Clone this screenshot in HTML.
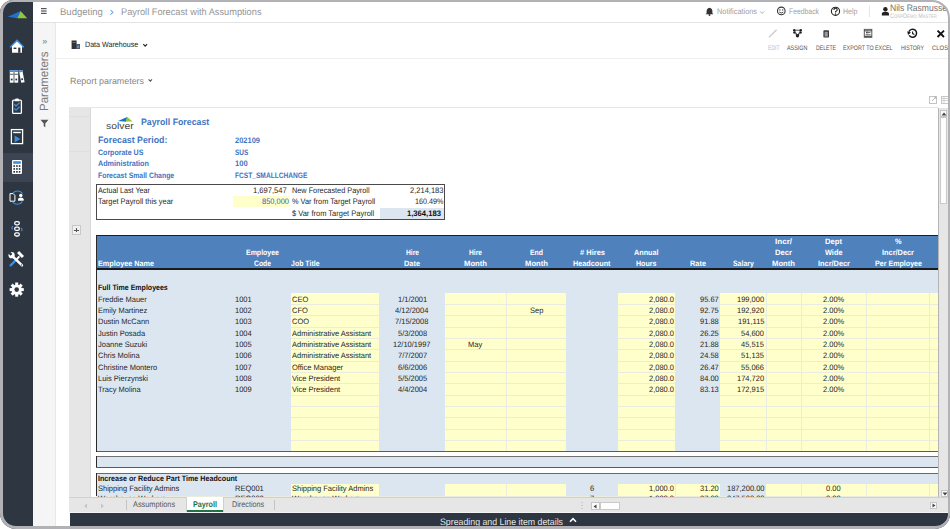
<!DOCTYPE html>
<html><head><meta charset="utf-8">
<style>
*{box-sizing:border-box;margin:0;padding:0}
html,body{width:950px;height:529px;overflow:hidden;background:#fff;font-family:"Liberation Sans",sans-serif;text-rendering:geometricPrecision}
.a{position:absolute}
.t{position:absolute;white-space:nowrap;line-height:1;transform-origin:0 0}
#frame{position:absolute;left:0;top:0;width:950px;height:529px;border-style:solid;border-color:#b2b2b6;border-width:2px 2px 3px 3px;border-radius:13px 18px 15px 16px;box-shadow:0 0 0 30px #fff;pointer-events:none;z-index:100}
</style></head>
<body>
<div class="a" style="left:0px;top:0px;width:33px;height:529px;background:#2e3641;"></div>
<div class="a" style="left:0px;top:153px;width:33px;height:29px;background:#3b4450;"></div>
<div class="a" style="left:33px;top:0px;width:917px;height:23px;background:#fff;border-bottom:1px solid #e3e3e3"></div>
<div class="a" style="left:33px;top:23px;width:23px;height:506px;background:#f5f5f5;border-right:1px solid #e8e8e8"></div>
<div class="a" style="left:56px;top:23px;width:894px;height:506px;background:#fff;"></div>
<div class="a" style="left:56px;top:57.5px;width:894px;height:1px;background:#efefef;"></div>
<div class="t" style="left:59.60px;top:8px;font-size:9.6px;color:#959595;transform:scaleX(0.9922);">Budgeting</div>
<svg class="a" style="left:108px;top:8px" width="8" height="8" viewBox="0 0 8 8"><path d="M2.4 2.2 L5.2 4.4 L2.4 6.6" fill="none" stroke="#4a90e2" stroke-width="1"/></svg>
<svg class="a" style="left:146px;top:76px" width="8" height="8" viewBox="0 0 8 8"><path d="M2.6 3.4 L4.3 5.1 L6 3.4" fill="none" stroke="#555" stroke-width="1.1"/></svg>
<div class="t" style="left:120.90px;top:8px;font-size:9.6px;color:#959595;transform:scaleX(0.9617);">Payroll Forecast with Assumptions</div>
<div class="t" style="left:717.00px;top:8px;font-size:8.0px;color:#a0a0a0;transform:scaleX(0.9180);">Notifications</div>
<div class="t" style="left:789.00px;top:8px;font-size:8.0px;color:#a0a0a0;transform:scaleX(0.8539);">Feedback</div>
<div class="t" style="left:842.70px;top:8px;font-size:8.0px;color:#a0a0a0;transform:scaleX(0.8691);">Help</div>
<div class="a" style="left:869px;top:6px;width:1px;height:11px;background:#e6e6e6;"></div>
<div class="t" style="left:890.30px;top:3px;font-size:9.4px;color:#737373;transform:scaleX(0.9130);">Nils Rasmussen</div>
<div class="t" style="left:890px;top:13.5px;font-size:6.6px;color:#c2c2c2;font-variant:small-caps;transform:scaleX(0.84)">CorpDemo Master</div>
<div class="t" style="left:84.70px;top:41px;font-size:7.8px;color:#222;transform:scaleX(0.9134);">Data Warehouse</div>
<div class="t" style="left:767.90px;top:46px;font-size:6.5px;color:#bdbdbd;transform:scaleX(0.7835);">EDIT</div>
<div class="t" style="left:787.40px;top:46px;font-size:6.5px;color:#555;transform:scaleX(0.8346);">ASSIGN</div>
<div class="t" style="left:815.80px;top:46px;font-size:6.5px;color:#555;transform:scaleX(0.7909);">DELETE</div>
<div class="t" style="left:843.00px;top:46px;font-size:6.5px;color:#555;transform:scaleX(0.8237);">EXPORT TO EXCEL</div>
<div class="t" style="left:901.00px;top:46px;font-size:6.5px;color:#555;transform:scaleX(0.8026);">HISTORY</div>
<div class="t" style="left:932.00px;top:46px;font-size:6.5px;color:#555;transform:scaleX(0.9076);">CLOSE</div>
<div class="t" style="left:70.00px;top:77px;font-size:9.0px;color:#858585;transform:scaleX(0.9862);">Report parameters</div>
<div class="a" style="left:69px;top:108px;width:869px;height:389px;background:#fff;"></div>
<div class="a" style="left:69px;top:108px;width:22px;height:389px;background:#e6e6e6;border-right:1px solid #d8d8d8"></div>
<div class="a" style="left:69px;top:116px;width:22px;height:1px;background:#dedede;"></div>
<div class="a" style="left:69px;top:151px;width:22px;height:1px;background:#dedede;"></div>
<div class="a" style="left:71.5px;top:225.3px;width:9.5px;height:9.5px;background:#f0f0f0;border:1px solid #c8c8c8"></div>
<div class="a" style="left:74px;top:229.6px;width:4.5px;height:1px;background:#555;"></div>
<div class="a" style="left:75.75px;top:227.8px;width:1px;height:4.5px;background:#555;"></div>
<div class="t" style="left:106.20px;top:122px;font-size:9.3px;color:#444;transform:scaleX(1.1166);">solver</div>
<svg class="a" style="left:117px;top:116px" width="17" height="7" viewBox="0 0 17 7"><polygon points="1,5 10.2,1 9.2,5.8" fill="#1f6fc0"/><polygon points="10.2,1 15.6,5.5 8.6,5.5" fill="#8cc63f"/></svg>
<div class="t" style="left:140.80px;top:118px;font-size:9.3px;color:#4275c2;font-weight:bold;transform:scaleX(0.9424);">Payroll Forecast</div>
<div class="t" style="left:97.60px;top:136px;font-size:9.3px;color:#4275c2;font-weight:bold;transform:scaleX(0.9456);">Forecast Period:</div>
<div class="t" style="left:234.80px;top:137px;font-size:7.9px;color:#4275c2;font-weight:bold;transform:scaleX(0.9483);">202109</div>
<div class="t" style="left:97.60px;top:149px;font-size:7.9px;color:#4275c2;font-weight:bold;transform:scaleX(0.8916);">Corporate US</div>
<div class="t" style="left:234.80px;top:149px;font-size:7.9px;color:#4275c2;font-weight:bold;transform:scaleX(0.8126);">SUS</div>
<div class="t" style="left:97.60px;top:160px;font-size:7.9px;color:#4275c2;font-weight:bold;transform:scaleX(0.9150);">Administration</div>
<div class="t" style="left:234.80px;top:160px;font-size:7.9px;color:#4275c2;font-weight:bold;transform:scaleX(0.9635);">100</div>
<div class="t" style="left:97.60px;top:172px;font-size:7.9px;color:#4275c2;font-weight:bold;transform:scaleX(0.8733);">Forecast Small Change</div>
<div class="t" style="left:234.80px;top:172px;font-size:7.9px;color:#4275c2;font-weight:bold;transform:scaleX(0.8385);">FCST_SMALLCHANGE</div>
<div class="a" style="left:233px;top:196.4px;width:57px;height:11px;background:#ffffcc;"></div>
<div class="a" style="left:379.5px;top:207.5px;width:64px;height:11.3px;background:#dce6f1;"></div>
<div class="a" style="left:96.3px;top:184px;width:349.2px;height:36px;background:transparent;border:1px solid #4a4a4a"></div>
<div class="t" style="left:98.00px;top:187px;font-size:8.0px;color:#262626;transform:scaleX(0.8993);">Actual Last Year</div>
<div class="t" style="left:253.00px;top:187px;font-size:8.0px;color:#262626;transform:scaleX(0.9497);">1,697,547</div>
<div class="t" style="left:291.80px;top:187px;font-size:8.0px;color:#262626;transform:scaleX(0.9138);">New Forecasted Payroll</div>
<div class="t" style="left:409.80px;top:187px;font-size:8.0px;color:#262626;transform:scaleX(0.9413);">2,214,183</div>
<div class="t" style="left:98.00px;top:198px;font-size:8.0px;color:#262626;transform:scaleX(0.9242);">Target Payroll this year</div>
<div class="t" style="left:262.00px;top:198px;font-size:8.0px;color:#2f64b0;transform:scaleX(0.9337);">850,000</div>
<div class="t" style="left:291.80px;top:198px;font-size:8.0px;color:#262626;transform:scaleX(0.9203);">% Var from Target Payroll</div>
<div class="t" style="left:414.80px;top:198px;font-size:8.0px;color:#262626;transform:scaleX(0.9024);">160.49%</div>
<div class="t" style="left:291.80px;top:210px;font-size:8.0px;color:#262626;transform:scaleX(0.9368);">$ Var from Target Payroll</div>
<div class="t" style="left:407.40px;top:210px;font-size:8.0px;color:#111;font-weight:bold;transform:scaleX(0.9553);">1,364,183</div>
<div class="a" style="left:96.4px;top:234.9px;width:841.6px;height:1.2px;background:#1e1e1e;"></div>
<div class="a" style="left:96.4px;top:236px;width:841.6px;height:32.2px;background:#4f81bd;"></div>
<div class="a" style="left:96.4px;top:268.1px;width:841.6px;height:2px;background:#1a1a1a;"></div>
<div class="a" style="left:96.4px;top:270px;width:841.6px;height:181.3px;background:#dce6f1;"></div>
<div class="a" style="left:96.4px;top:451.1px;width:841.6px;height:1.1px;background:#5c5c5c;"></div>
<div class="a" style="left:96.4px;top:234.9px;width:1.1px;height:217px;background:#2a2a2a;"></div>
<div class="a" style="left:290.7px;top:293.2px;width:88.5px;height:157.90000000000003px;background:#ffffcc;"></div>
<div class="a" style="left:445.4px;top:293.2px;width:60.60000000000002px;height:157.90000000000003px;background:#ffffcc;"></div>
<div class="a" style="left:506.0px;top:293.2px;width:60.299999999999955px;height:157.90000000000003px;background:#ffffcc;"></div>
<div class="a" style="left:618.0px;top:293.2px;width:57.39999999999998px;height:157.90000000000003px;background:#ffffcc;"></div>
<div class="a" style="left:720.3px;top:293.2px;width:45.700000000000045px;height:157.90000000000003px;background:#ffffcc;"></div>
<div class="a" style="left:766.0px;top:293.2px;width:35.200000000000045px;height:157.90000000000003px;background:#ffffcc;"></div>
<div class="a" style="left:801.2px;top:293.2px;width:65.09999999999991px;height:157.90000000000003px;background:#ffffcc;"></div>
<div class="a" style="left:866.3px;top:293.2px;width:63.200000000000045px;height:157.90000000000003px;background:#ffffcc;"></div>
<div class="a" style="left:929.5px;top:293.2px;width:8.5px;height:157.90000000000003px;background:#ffffcc;"></div>
<div class="a" style="left:290.7px;top:304.03px;width:88.5px;height:1px;background:#e9ecdf;"></div>
<div class="a" style="left:445.4px;top:304.03px;width:60.60000000000002px;height:1px;background:#e9ecdf;"></div>
<div class="a" style="left:506.0px;top:304.03px;width:60.299999999999955px;height:1px;background:#e9ecdf;"></div>
<div class="a" style="left:618.0px;top:304.03px;width:57.39999999999998px;height:1px;background:#e9ecdf;"></div>
<div class="a" style="left:720.3px;top:304.03px;width:45.700000000000045px;height:1px;background:#e9ecdf;"></div>
<div class="a" style="left:766.0px;top:304.03px;width:35.200000000000045px;height:1px;background:#e9ecdf;"></div>
<div class="a" style="left:801.2px;top:304.03px;width:65.09999999999991px;height:1px;background:#e9ecdf;"></div>
<div class="a" style="left:866.3px;top:304.03px;width:63.200000000000045px;height:1px;background:#e9ecdf;"></div>
<div class="a" style="left:929.5px;top:304.03px;width:8.5px;height:1px;background:#e9ecdf;"></div>
<div class="a" style="left:290.7px;top:315.36px;width:88.5px;height:1px;background:#e9ecdf;"></div>
<div class="a" style="left:445.4px;top:315.36px;width:60.60000000000002px;height:1px;background:#e9ecdf;"></div>
<div class="a" style="left:506.0px;top:315.36px;width:60.299999999999955px;height:1px;background:#e9ecdf;"></div>
<div class="a" style="left:618.0px;top:315.36px;width:57.39999999999998px;height:1px;background:#e9ecdf;"></div>
<div class="a" style="left:720.3px;top:315.36px;width:45.700000000000045px;height:1px;background:#e9ecdf;"></div>
<div class="a" style="left:766.0px;top:315.36px;width:35.200000000000045px;height:1px;background:#e9ecdf;"></div>
<div class="a" style="left:801.2px;top:315.36px;width:65.09999999999991px;height:1px;background:#e9ecdf;"></div>
<div class="a" style="left:866.3px;top:315.36px;width:63.200000000000045px;height:1px;background:#e9ecdf;"></div>
<div class="a" style="left:929.5px;top:315.36px;width:8.5px;height:1px;background:#e9ecdf;"></div>
<div class="a" style="left:290.7px;top:326.69px;width:88.5px;height:1px;background:#e9ecdf;"></div>
<div class="a" style="left:445.4px;top:326.69px;width:60.60000000000002px;height:1px;background:#e9ecdf;"></div>
<div class="a" style="left:506.0px;top:326.69px;width:60.299999999999955px;height:1px;background:#e9ecdf;"></div>
<div class="a" style="left:618.0px;top:326.69px;width:57.39999999999998px;height:1px;background:#e9ecdf;"></div>
<div class="a" style="left:720.3px;top:326.69px;width:45.700000000000045px;height:1px;background:#e9ecdf;"></div>
<div class="a" style="left:766.0px;top:326.69px;width:35.200000000000045px;height:1px;background:#e9ecdf;"></div>
<div class="a" style="left:801.2px;top:326.69px;width:65.09999999999991px;height:1px;background:#e9ecdf;"></div>
<div class="a" style="left:866.3px;top:326.69px;width:63.200000000000045px;height:1px;background:#e9ecdf;"></div>
<div class="a" style="left:929.5px;top:326.69px;width:8.5px;height:1px;background:#e9ecdf;"></div>
<div class="a" style="left:290.7px;top:338.02px;width:88.5px;height:1px;background:#e9ecdf;"></div>
<div class="a" style="left:445.4px;top:338.02px;width:60.60000000000002px;height:1px;background:#e9ecdf;"></div>
<div class="a" style="left:506.0px;top:338.02px;width:60.299999999999955px;height:1px;background:#e9ecdf;"></div>
<div class="a" style="left:618.0px;top:338.02px;width:57.39999999999998px;height:1px;background:#e9ecdf;"></div>
<div class="a" style="left:720.3px;top:338.02px;width:45.700000000000045px;height:1px;background:#e9ecdf;"></div>
<div class="a" style="left:766.0px;top:338.02px;width:35.200000000000045px;height:1px;background:#e9ecdf;"></div>
<div class="a" style="left:801.2px;top:338.02px;width:65.09999999999991px;height:1px;background:#e9ecdf;"></div>
<div class="a" style="left:866.3px;top:338.02px;width:63.200000000000045px;height:1px;background:#e9ecdf;"></div>
<div class="a" style="left:929.5px;top:338.02px;width:8.5px;height:1px;background:#e9ecdf;"></div>
<div class="a" style="left:290.7px;top:349.34999999999997px;width:88.5px;height:1px;background:#e9ecdf;"></div>
<div class="a" style="left:445.4px;top:349.34999999999997px;width:60.60000000000002px;height:1px;background:#e9ecdf;"></div>
<div class="a" style="left:506.0px;top:349.34999999999997px;width:60.299999999999955px;height:1px;background:#e9ecdf;"></div>
<div class="a" style="left:618.0px;top:349.34999999999997px;width:57.39999999999998px;height:1px;background:#e9ecdf;"></div>
<div class="a" style="left:720.3px;top:349.34999999999997px;width:45.700000000000045px;height:1px;background:#e9ecdf;"></div>
<div class="a" style="left:766.0px;top:349.34999999999997px;width:35.200000000000045px;height:1px;background:#e9ecdf;"></div>
<div class="a" style="left:801.2px;top:349.34999999999997px;width:65.09999999999991px;height:1px;background:#e9ecdf;"></div>
<div class="a" style="left:866.3px;top:349.34999999999997px;width:63.200000000000045px;height:1px;background:#e9ecdf;"></div>
<div class="a" style="left:929.5px;top:349.34999999999997px;width:8.5px;height:1px;background:#e9ecdf;"></div>
<div class="a" style="left:290.7px;top:360.68px;width:88.5px;height:1px;background:#e9ecdf;"></div>
<div class="a" style="left:445.4px;top:360.68px;width:60.60000000000002px;height:1px;background:#e9ecdf;"></div>
<div class="a" style="left:506.0px;top:360.68px;width:60.299999999999955px;height:1px;background:#e9ecdf;"></div>
<div class="a" style="left:618.0px;top:360.68px;width:57.39999999999998px;height:1px;background:#e9ecdf;"></div>
<div class="a" style="left:720.3px;top:360.68px;width:45.700000000000045px;height:1px;background:#e9ecdf;"></div>
<div class="a" style="left:766.0px;top:360.68px;width:35.200000000000045px;height:1px;background:#e9ecdf;"></div>
<div class="a" style="left:801.2px;top:360.68px;width:65.09999999999991px;height:1px;background:#e9ecdf;"></div>
<div class="a" style="left:866.3px;top:360.68px;width:63.200000000000045px;height:1px;background:#e9ecdf;"></div>
<div class="a" style="left:929.5px;top:360.68px;width:8.5px;height:1px;background:#e9ecdf;"></div>
<div class="a" style="left:290.7px;top:372.01px;width:88.5px;height:1px;background:#e9ecdf;"></div>
<div class="a" style="left:445.4px;top:372.01px;width:60.60000000000002px;height:1px;background:#e9ecdf;"></div>
<div class="a" style="left:506.0px;top:372.01px;width:60.299999999999955px;height:1px;background:#e9ecdf;"></div>
<div class="a" style="left:618.0px;top:372.01px;width:57.39999999999998px;height:1px;background:#e9ecdf;"></div>
<div class="a" style="left:720.3px;top:372.01px;width:45.700000000000045px;height:1px;background:#e9ecdf;"></div>
<div class="a" style="left:766.0px;top:372.01px;width:35.200000000000045px;height:1px;background:#e9ecdf;"></div>
<div class="a" style="left:801.2px;top:372.01px;width:65.09999999999991px;height:1px;background:#e9ecdf;"></div>
<div class="a" style="left:866.3px;top:372.01px;width:63.200000000000045px;height:1px;background:#e9ecdf;"></div>
<div class="a" style="left:929.5px;top:372.01px;width:8.5px;height:1px;background:#e9ecdf;"></div>
<div class="a" style="left:290.7px;top:383.34px;width:88.5px;height:1px;background:#e9ecdf;"></div>
<div class="a" style="left:445.4px;top:383.34px;width:60.60000000000002px;height:1px;background:#e9ecdf;"></div>
<div class="a" style="left:506.0px;top:383.34px;width:60.299999999999955px;height:1px;background:#e9ecdf;"></div>
<div class="a" style="left:618.0px;top:383.34px;width:57.39999999999998px;height:1px;background:#e9ecdf;"></div>
<div class="a" style="left:720.3px;top:383.34px;width:45.700000000000045px;height:1px;background:#e9ecdf;"></div>
<div class="a" style="left:766.0px;top:383.34px;width:35.200000000000045px;height:1px;background:#e9ecdf;"></div>
<div class="a" style="left:801.2px;top:383.34px;width:65.09999999999991px;height:1px;background:#e9ecdf;"></div>
<div class="a" style="left:866.3px;top:383.34px;width:63.200000000000045px;height:1px;background:#e9ecdf;"></div>
<div class="a" style="left:929.5px;top:383.34px;width:8.5px;height:1px;background:#e9ecdf;"></div>
<div class="a" style="left:290.7px;top:394.66999999999996px;width:88.5px;height:1px;background:#e9ecdf;"></div>
<div class="a" style="left:445.4px;top:394.66999999999996px;width:60.60000000000002px;height:1px;background:#e9ecdf;"></div>
<div class="a" style="left:506.0px;top:394.66999999999996px;width:60.299999999999955px;height:1px;background:#e9ecdf;"></div>
<div class="a" style="left:618.0px;top:394.66999999999996px;width:57.39999999999998px;height:1px;background:#e9ecdf;"></div>
<div class="a" style="left:720.3px;top:394.66999999999996px;width:45.700000000000045px;height:1px;background:#e9ecdf;"></div>
<div class="a" style="left:766.0px;top:394.66999999999996px;width:35.200000000000045px;height:1px;background:#e9ecdf;"></div>
<div class="a" style="left:801.2px;top:394.66999999999996px;width:65.09999999999991px;height:1px;background:#e9ecdf;"></div>
<div class="a" style="left:866.3px;top:394.66999999999996px;width:63.200000000000045px;height:1px;background:#e9ecdf;"></div>
<div class="a" style="left:929.5px;top:394.66999999999996px;width:8.5px;height:1px;background:#e9ecdf;"></div>
<div class="a" style="left:290.7px;top:406.0px;width:88.5px;height:1px;background:#e9ecdf;"></div>
<div class="a" style="left:445.4px;top:406.0px;width:60.60000000000002px;height:1px;background:#e9ecdf;"></div>
<div class="a" style="left:506.0px;top:406.0px;width:60.299999999999955px;height:1px;background:#e9ecdf;"></div>
<div class="a" style="left:618.0px;top:406.0px;width:57.39999999999998px;height:1px;background:#e9ecdf;"></div>
<div class="a" style="left:720.3px;top:406.0px;width:45.700000000000045px;height:1px;background:#e9ecdf;"></div>
<div class="a" style="left:766.0px;top:406.0px;width:35.200000000000045px;height:1px;background:#e9ecdf;"></div>
<div class="a" style="left:801.2px;top:406.0px;width:65.09999999999991px;height:1px;background:#e9ecdf;"></div>
<div class="a" style="left:866.3px;top:406.0px;width:63.200000000000045px;height:1px;background:#e9ecdf;"></div>
<div class="a" style="left:929.5px;top:406.0px;width:8.5px;height:1px;background:#e9ecdf;"></div>
<div class="a" style="left:290.7px;top:417.33px;width:88.5px;height:1px;background:#e9ecdf;"></div>
<div class="a" style="left:445.4px;top:417.33px;width:60.60000000000002px;height:1px;background:#e9ecdf;"></div>
<div class="a" style="left:506.0px;top:417.33px;width:60.299999999999955px;height:1px;background:#e9ecdf;"></div>
<div class="a" style="left:618.0px;top:417.33px;width:57.39999999999998px;height:1px;background:#e9ecdf;"></div>
<div class="a" style="left:720.3px;top:417.33px;width:45.700000000000045px;height:1px;background:#e9ecdf;"></div>
<div class="a" style="left:766.0px;top:417.33px;width:35.200000000000045px;height:1px;background:#e9ecdf;"></div>
<div class="a" style="left:801.2px;top:417.33px;width:65.09999999999991px;height:1px;background:#e9ecdf;"></div>
<div class="a" style="left:866.3px;top:417.33px;width:63.200000000000045px;height:1px;background:#e9ecdf;"></div>
<div class="a" style="left:929.5px;top:417.33px;width:8.5px;height:1px;background:#e9ecdf;"></div>
<div class="a" style="left:290.7px;top:428.65999999999997px;width:88.5px;height:1px;background:#e9ecdf;"></div>
<div class="a" style="left:445.4px;top:428.65999999999997px;width:60.60000000000002px;height:1px;background:#e9ecdf;"></div>
<div class="a" style="left:506.0px;top:428.65999999999997px;width:60.299999999999955px;height:1px;background:#e9ecdf;"></div>
<div class="a" style="left:618.0px;top:428.65999999999997px;width:57.39999999999998px;height:1px;background:#e9ecdf;"></div>
<div class="a" style="left:720.3px;top:428.65999999999997px;width:45.700000000000045px;height:1px;background:#e9ecdf;"></div>
<div class="a" style="left:766.0px;top:428.65999999999997px;width:35.200000000000045px;height:1px;background:#e9ecdf;"></div>
<div class="a" style="left:801.2px;top:428.65999999999997px;width:65.09999999999991px;height:1px;background:#e9ecdf;"></div>
<div class="a" style="left:866.3px;top:428.65999999999997px;width:63.200000000000045px;height:1px;background:#e9ecdf;"></div>
<div class="a" style="left:929.5px;top:428.65999999999997px;width:8.5px;height:1px;background:#e9ecdf;"></div>
<div class="a" style="left:290.7px;top:439.99px;width:88.5px;height:1px;background:#e9ecdf;"></div>
<div class="a" style="left:445.4px;top:439.99px;width:60.60000000000002px;height:1px;background:#e9ecdf;"></div>
<div class="a" style="left:506.0px;top:439.99px;width:60.299999999999955px;height:1px;background:#e9ecdf;"></div>
<div class="a" style="left:618.0px;top:439.99px;width:57.39999999999998px;height:1px;background:#e9ecdf;"></div>
<div class="a" style="left:720.3px;top:439.99px;width:45.700000000000045px;height:1px;background:#e9ecdf;"></div>
<div class="a" style="left:766.0px;top:439.99px;width:35.200000000000045px;height:1px;background:#e9ecdf;"></div>
<div class="a" style="left:801.2px;top:439.99px;width:65.09999999999991px;height:1px;background:#e9ecdf;"></div>
<div class="a" style="left:866.3px;top:439.99px;width:63.200000000000045px;height:1px;background:#e9ecdf;"></div>
<div class="a" style="left:929.5px;top:439.99px;width:8.5px;height:1px;background:#e9ecdf;"></div>
<div class="a" style="left:505.5px;top:293.2px;width:1px;height:157.90000000000003px;background:#e9ecdf;"></div>
<div class="a" style="left:765.5px;top:293.2px;width:1px;height:157.90000000000003px;background:#e9ecdf;"></div>
<div class="a" style="left:800.7px;top:293.2px;width:1px;height:157.90000000000003px;background:#e9ecdf;"></div>
<div class="a" style="left:865.8px;top:293.2px;width:1px;height:157.90000000000003px;background:#e9ecdf;"></div>
<div class="a" style="left:929.0px;top:293.2px;width:1px;height:157.90000000000003px;background:#e9ecdf;"></div>
<div class="t" style="left:97.70px;top:260px;font-size:7.8px;color:#ffffff;font-weight:bold;transform:scaleX(0.9293);">Employee Name</div>
<div class="t" style="left:246.00px;top:249px;font-size:7.8px;color:#ffffff;font-weight:bold;transform:scaleX(0.8955);">Employee</div>
<div class="t" style="left:254.00px;top:260px;font-size:7.8px;color:#ffffff;font-weight:bold;transform:scaleX(0.8718);">Code</div>
<div class="t" style="left:291.40px;top:260px;font-size:7.8px;color:#ffffff;font-weight:bold;transform:scaleX(0.8958);">Job Title</div>
<div class="t" style="left:405.60px;top:249px;font-size:7.8px;color:#ffffff;font-weight:bold;transform:scaleX(0.8568);">Hire</div>
<div class="t" style="left:404.10px;top:260px;font-size:7.8px;color:#ffffff;font-weight:bold;transform:scaleX(0.9463);">Date</div>
<div class="t" style="left:468.80px;top:249px;font-size:7.8px;color:#ffffff;font-weight:bold;transform:scaleX(0.8568);">Hire</div>
<div class="t" style="left:463.80px;top:260px;font-size:7.8px;color:#ffffff;font-weight:bold;transform:scaleX(0.9833);">Month</div>
<div class="t" style="left:529.60px;top:249px;font-size:7.8px;color:#ffffff;font-weight:bold;transform:scaleX(0.8824);">End</div>
<div class="t" style="left:524.60px;top:260px;font-size:7.8px;color:#ffffff;font-weight:bold;transform:scaleX(0.9833);">Month</div>
<div class="t" style="left:579.70px;top:249px;font-size:7.8px;color:#ffffff;font-weight:bold;transform:scaleX(0.9609);"># Hires</div>
<div class="t" style="left:573.45px;top:260px;font-size:7.8px;color:#ffffff;font-weight:bold;transform:scaleX(0.9304);">Headcount</div>
<div class="t" style="left:634.25px;top:249px;font-size:7.8px;color:#ffffff;font-weight:bold;transform:scaleX(0.9269);">Annual</div>
<div class="t" style="left:636.25px;top:260px;font-size:7.8px;color:#ffffff;font-weight:bold;transform:scaleX(0.9097);">Hours</div>
<div class="t" style="left:690.00px;top:260px;font-size:7.8px;color:#ffffff;font-weight:bold;transform:scaleX(0.9463);">Rate</div>
<div class="t" style="left:732.70px;top:260px;font-size:7.8px;color:#ffffff;font-weight:bold;transform:scaleX(0.8881);">Salary</div>
<div class="t" style="left:774.80px;top:238px;font-size:7.8px;color:#ffffff;font-weight:bold;transform:scaleX(1.0321);">Incr/</div>
<div class="t" style="left:774.80px;top:249px;font-size:7.8px;color:#ffffff;font-weight:bold;transform:scaleX(0.9801);">Decr</div>
<div class="t" style="left:771.80px;top:260px;font-size:7.8px;color:#ffffff;font-weight:bold;transform:scaleX(0.9833);">Month</div>
<div class="t" style="left:825.30px;top:238px;font-size:7.8px;color:#ffffff;font-weight:bold;transform:scaleX(0.9808);">Dept</div>
<div class="t" style="left:825.05px;top:249px;font-size:7.8px;color:#ffffff;font-weight:bold;transform:scaleX(0.9427);">Wide</div>
<div class="t" style="left:817.80px;top:260px;font-size:7.8px;color:#ffffff;font-weight:bold;transform:scaleX(0.9463);">Incr/Decr</div>
<div class="t" style="left:894.95px;top:238px;font-size:7.8px;color:#ffffff;font-weight:bold;transform:scaleX(0.9372);">%</div>
<div class="t" style="left:882.20px;top:249px;font-size:7.8px;color:#ffffff;font-weight:bold;transform:scaleX(0.9463);">Incr/Decr</div>
<div class="t" style="left:874.70px;top:260px;font-size:7.8px;color:#ffffff;font-weight:bold;transform:scaleX(0.9110);">Per Employee</div>
<div class="t" style="left:98.00px;top:284px;font-size:7.8px;color:#111;font-weight:bold;transform:scaleX(0.9012);">Full Time Employees</div>
<div class="t" style="left:98.00px;top:296px;font-size:7.8px;color:#262626;transform:scaleX(0.9615);">Freddie Mauer</div>
<div class="t" style="left:234.90px;top:296px;font-size:7.8px;color:#262626;transform:scaleX(0.9615);">1001</div>
<div class="t" style="left:291.60px;top:296px;font-size:7.8px;color:#262626;transform:scaleX(0.9615);">CEO</div>
<div class="t" style="left:397.50px;top:296px;font-size:7.8px;color:#262626;transform:scaleX(0.9615);">1/1/2001</div>
<div class="t" style="left:649.48px;top:296px;font-size:7.8px;color:#262626;transform:scaleX(0.9615);">2,080.0</div>
<div class="t" style="left:699.73px;top:296px;font-size:7.8px;color:#262626;transform:scaleX(0.9615);">95.67</div>
<div class="t" style="left:737.19px;top:296px;font-size:7.8px;color:#262626;transform:scaleX(0.9615);">199,000</div>
<div class="t" style="left:823.07px;top:296px;font-size:7.8px;color:#262626;transform:scaleX(0.9615);">2.00%</div>
<div class="t" style="left:98.00px;top:307px;font-size:7.8px;color:#262626;transform:scaleX(0.9615);">Emily Martinez</div>
<div class="t" style="left:234.90px;top:307px;font-size:7.8px;color:#262626;transform:scaleX(0.9615);">1002</div>
<div class="t" style="left:291.60px;top:307px;font-size:7.8px;color:#262626;transform:scaleX(0.9615);">CFO</div>
<div class="t" style="left:395.42px;top:307px;font-size:7.8px;color:#262626;transform:scaleX(0.9615);">4/12/2004</div>
<div class="t" style="left:529.93px;top:307px;font-size:7.8px;color:#262626;transform:scaleX(0.9615);">Sep</div>
<div class="t" style="left:649.48px;top:307px;font-size:7.8px;color:#262626;transform:scaleX(0.9615);">2,080.0</div>
<div class="t" style="left:699.73px;top:307px;font-size:7.8px;color:#262626;transform:scaleX(0.9615);">92.75</div>
<div class="t" style="left:737.19px;top:307px;font-size:7.8px;color:#262626;transform:scaleX(0.9615);">192,920</div>
<div class="t" style="left:823.07px;top:307px;font-size:7.8px;color:#262626;transform:scaleX(0.9615);">2.00%</div>
<div class="t" style="left:98.00px;top:318px;font-size:7.8px;color:#262626;transform:scaleX(0.9615);">Dustin McCann</div>
<div class="t" style="left:234.90px;top:318px;font-size:7.8px;color:#262626;transform:scaleX(0.9615);">1003</div>
<div class="t" style="left:291.60px;top:318px;font-size:7.8px;color:#262626;transform:scaleX(0.9615);">COO</div>
<div class="t" style="left:395.42px;top:318px;font-size:7.8px;color:#262626;transform:scaleX(0.9615);">7/15/2008</div>
<div class="t" style="left:649.48px;top:318px;font-size:7.8px;color:#262626;transform:scaleX(0.9615);">2,080.0</div>
<div class="t" style="left:699.73px;top:318px;font-size:7.8px;color:#262626;transform:scaleX(0.9615);">91.88</div>
<div class="t" style="left:737.75px;top:318px;font-size:7.8px;color:#262626;transform:scaleX(0.9615);">191,115</div>
<div class="t" style="left:823.07px;top:318px;font-size:7.8px;color:#262626;transform:scaleX(0.9615);">2.00%</div>
<div class="t" style="left:98.00px;top:330px;font-size:7.8px;color:#262626;transform:scaleX(0.9615);">Justin Posada</div>
<div class="t" style="left:234.90px;top:330px;font-size:7.8px;color:#262626;transform:scaleX(0.9615);">1004</div>
<div class="t" style="left:291.60px;top:330px;font-size:7.8px;color:#262626;transform:scaleX(0.9615);">Administrative Assistant</div>
<div class="t" style="left:397.50px;top:330px;font-size:7.8px;color:#262626;transform:scaleX(0.9615);">5/3/2008</div>
<div class="t" style="left:649.48px;top:330px;font-size:7.8px;color:#262626;transform:scaleX(0.9615);">2,080.0</div>
<div class="t" style="left:699.73px;top:330px;font-size:7.8px;color:#262626;transform:scaleX(0.9615);">26.25</div>
<div class="t" style="left:741.36px;top:330px;font-size:7.8px;color:#262626;transform:scaleX(0.9615);">54,600</div>
<div class="t" style="left:823.07px;top:330px;font-size:7.8px;color:#262626;transform:scaleX(0.9615);">2.00%</div>
<div class="t" style="left:98.00px;top:341px;font-size:7.8px;color:#262626;transform:scaleX(0.9615);">Joanne Suzuki</div>
<div class="t" style="left:234.90px;top:341px;font-size:7.8px;color:#262626;transform:scaleX(0.9615);">1005</div>
<div class="t" style="left:291.60px;top:341px;font-size:7.8px;color:#262626;transform:scaleX(0.9615);">Administrative Assistant</div>
<div class="t" style="left:393.33px;top:341px;font-size:7.8px;color:#262626;transform:scaleX(0.9615);">12/10/1997</div>
<div class="t" style="left:468.22px;top:341px;font-size:7.8px;color:#262626;transform:scaleX(0.9615);">May</div>
<div class="t" style="left:649.48px;top:341px;font-size:7.8px;color:#262626;transform:scaleX(0.9615);">2,080.0</div>
<div class="t" style="left:699.73px;top:341px;font-size:7.8px;color:#262626;transform:scaleX(0.9615);">21.88</div>
<div class="t" style="left:741.36px;top:341px;font-size:7.8px;color:#262626;transform:scaleX(0.9615);">45,515</div>
<div class="t" style="left:823.07px;top:341px;font-size:7.8px;color:#262626;transform:scaleX(0.9615);">2.00%</div>
<div class="t" style="left:98.00px;top:352px;font-size:7.8px;color:#262626;transform:scaleX(0.9615);">Chris Molina</div>
<div class="t" style="left:234.90px;top:352px;font-size:7.8px;color:#262626;transform:scaleX(0.9615);">1006</div>
<div class="t" style="left:291.60px;top:352px;font-size:7.8px;color:#262626;transform:scaleX(0.9615);">Administrative Assistant</div>
<div class="t" style="left:397.50px;top:352px;font-size:7.8px;color:#262626;transform:scaleX(0.9615);">7/7/2007</div>
<div class="t" style="left:649.48px;top:352px;font-size:7.8px;color:#262626;transform:scaleX(0.9615);">2,080.0</div>
<div class="t" style="left:699.73px;top:352px;font-size:7.8px;color:#262626;transform:scaleX(0.9615);">24.58</div>
<div class="t" style="left:741.36px;top:352px;font-size:7.8px;color:#262626;transform:scaleX(0.9615);">51,135</div>
<div class="t" style="left:823.07px;top:352px;font-size:7.8px;color:#262626;transform:scaleX(0.9615);">2.00%</div>
<div class="t" style="left:98.00px;top:364px;font-size:7.8px;color:#262626;transform:scaleX(0.9615);">Christine Montero</div>
<div class="t" style="left:234.90px;top:364px;font-size:7.8px;color:#262626;transform:scaleX(0.9615);">1007</div>
<div class="t" style="left:291.60px;top:364px;font-size:7.8px;color:#262626;transform:scaleX(0.9615);">Office Manager</div>
<div class="t" style="left:397.50px;top:364px;font-size:7.8px;color:#262626;transform:scaleX(0.9615);">6/6/2006</div>
<div class="t" style="left:649.48px;top:364px;font-size:7.8px;color:#262626;transform:scaleX(0.9615);">2,080.0</div>
<div class="t" style="left:699.73px;top:364px;font-size:7.8px;color:#262626;transform:scaleX(0.9615);">26.47</div>
<div class="t" style="left:741.36px;top:364px;font-size:7.8px;color:#262626;transform:scaleX(0.9615);">55,066</div>
<div class="t" style="left:823.07px;top:364px;font-size:7.8px;color:#262626;transform:scaleX(0.9615);">2.00%</div>
<div class="t" style="left:98.00px;top:375px;font-size:7.8px;color:#262626;transform:scaleX(0.9615);">Luis Pierzynski</div>
<div class="t" style="left:234.90px;top:375px;font-size:7.8px;color:#262626;transform:scaleX(0.9615);">1008</div>
<div class="t" style="left:291.60px;top:375px;font-size:7.8px;color:#262626;transform:scaleX(0.9615);">Vice President</div>
<div class="t" style="left:397.50px;top:375px;font-size:7.8px;color:#262626;transform:scaleX(0.9615);">5/5/2005</div>
<div class="t" style="left:649.48px;top:375px;font-size:7.8px;color:#262626;transform:scaleX(0.9615);">2,080.0</div>
<div class="t" style="left:699.73px;top:375px;font-size:7.8px;color:#262626;transform:scaleX(0.9615);">84.00</div>
<div class="t" style="left:737.19px;top:375px;font-size:7.8px;color:#262626;transform:scaleX(0.9615);">174,720</div>
<div class="t" style="left:823.07px;top:375px;font-size:7.8px;color:#262626;transform:scaleX(0.9615);">2.00%</div>
<div class="t" style="left:98.00px;top:386px;font-size:7.8px;color:#262626;transform:scaleX(0.9615);">Tracy Molina</div>
<div class="t" style="left:234.90px;top:386px;font-size:7.8px;color:#262626;transform:scaleX(0.9615);">1009</div>
<div class="t" style="left:291.60px;top:386px;font-size:7.8px;color:#262626;transform:scaleX(0.9615);">Vice President</div>
<div class="t" style="left:397.50px;top:386px;font-size:7.8px;color:#262626;transform:scaleX(0.9615);">4/4/2004</div>
<div class="t" style="left:649.48px;top:386px;font-size:7.8px;color:#262626;transform:scaleX(0.9615);">2,080.0</div>
<div class="t" style="left:699.73px;top:386px;font-size:7.8px;color:#262626;transform:scaleX(0.9615);">83.13</div>
<div class="t" style="left:737.19px;top:386px;font-size:7.8px;color:#262626;transform:scaleX(0.9615);">172,915</div>
<div class="t" style="left:823.07px;top:386px;font-size:7.8px;color:#262626;transform:scaleX(0.9615);">2.00%</div>
<div class="a" style="left:96.4px;top:456px;width:841.6px;height:11.5px;background:#dce6f1;border-top:1px solid #707070;border-bottom:1px solid #5a5a5a"></div>
<div class="a" style="left:96.4px;top:456px;width:1.1px;height:11.3px;background:#2a2a2a;"></div>
<div class="a" style="left:96.4px;top:472.6px;width:841.6px;height:30px;background:#dce6f1;border-top:1px solid #6a6a6a"></div>
<div class="a" style="left:96.4px;top:472.6px;width:1.1px;height:30px;background:#2a2a2a;"></div>
<div class="a" style="left:290.7px;top:484.4px;width:88.5px;height:20px;background:#ffffcc;"></div>
<div class="a" style="left:445.4px;top:484.4px;width:60.60000000000002px;height:20px;background:#ffffcc;"></div>
<div class="a" style="left:506.0px;top:484.4px;width:60.299999999999955px;height:20px;background:#ffffcc;"></div>
<div class="a" style="left:618.0px;top:484.4px;width:57.39999999999998px;height:20px;background:#ffffcc;"></div>
<div class="a" style="left:675.4px;top:484.4px;width:44.89999999999998px;height:20px;background:#ffffcc;"></div>
<div class="a" style="left:766.0px;top:484.4px;width:35.200000000000045px;height:20px;background:#ffffcc;"></div>
<div class="a" style="left:801.2px;top:484.4px;width:65.09999999999991px;height:20px;background:#ffffcc;"></div>
<div class="a" style="left:866.3px;top:484.4px;width:63.200000000000045px;height:20px;background:#ffffcc;"></div>
<div class="a" style="left:929.5px;top:484.4px;width:8.5px;height:20px;background:#ffffcc;"></div>
<div class="a" style="left:505.5px;top:484.4px;width:1px;height:20px;background:#e9ecdf;"></div>
<div class="a" style="left:674.9px;top:484.4px;width:1px;height:20px;background:#e9ecdf;"></div>
<div class="a" style="left:800.7px;top:484.4px;width:1px;height:20px;background:#e9ecdf;"></div>
<div class="a" style="left:865.8px;top:484.4px;width:1px;height:20px;background:#e9ecdf;"></div>
<div class="a" style="left:929.0px;top:484.4px;width:1px;height:20px;background:#e9ecdf;"></div>
<div class="a" style="left:96.4px;top:495.7px;width:842px;height:1px;background:#e9ecdf;"></div>
<div class="t" style="left:98.00px;top:475px;font-size:7.8px;color:#111;font-weight:bold;transform:scaleX(0.9164);">Increase or Reduce Part Time Headcount</div>
<div class="t" style="left:98.00px;top:485px;font-size:7.8px;color:#262626;transform:scaleX(0.9615);">Shipping Facility Admins</div>
<div class="t" style="left:234.90px;top:485px;font-size:7.8px;color:#262626;transform:scaleX(0.9615);">REQ001</div>
<div class="t" style="left:291.60px;top:485px;font-size:7.8px;color:#262626;transform:scaleX(0.9615);">Shipping Facility Admins</div>
<div class="t" style="left:589.71px;top:485px;font-size:7.8px;color:#262626;transform:scaleX(0.9615);">6</div>
<div class="t" style="left:649.48px;top:485px;font-size:7.8px;color:#262626;transform:scaleX(0.9615);">1,000.0</div>
<div class="t" style="left:699.73px;top:485px;font-size:7.8px;color:#262626;transform:scaleX(0.9615);">31.20</div>
<div class="t" style="left:726.76px;top:485px;font-size:7.8px;color:#262626;transform:scaleX(0.9615);">187,200.00</div>
<div class="t" style="left:826.40px;top:485px;font-size:7.8px;color:#262626;transform:scaleX(0.9615);">0.00</div>
<div class="t" style="left:98.00px;top:495px;font-size:7.8px;color:#262626;transform:scaleX(0.9615);">Warehouse Workers</div>
<div class="t" style="left:234.90px;top:495px;font-size:7.8px;color:#262626;transform:scaleX(0.9615);">REQ002</div>
<div class="t" style="left:291.60px;top:495px;font-size:7.8px;color:#262626;transform:scaleX(0.9615);">Warehouse Workers</div>
<div class="t" style="left:589.71px;top:495px;font-size:7.8px;color:#262626;transform:scaleX(0.9615);">7</div>
<div class="t" style="left:649.48px;top:495px;font-size:7.8px;color:#262626;transform:scaleX(0.9615);">1,000.0</div>
<div class="t" style="left:699.73px;top:495px;font-size:7.8px;color:#262626;transform:scaleX(0.9615);">27.00</div>
<div class="t" style="left:726.76px;top:495px;font-size:7.8px;color:#262626;transform:scaleX(0.9615);">247,500.00</div>
<div class="t" style="left:826.40px;top:495px;font-size:7.8px;color:#262626;transform:scaleX(0.9615);">0.00</div>
<svg class="a" style="left:928px;top:95px" width="22" height="10" viewBox="0 0 22 10"><rect x="1.5" y="1.5" width="7" height="7" fill="none" stroke="#c4c4c4" stroke-width="1"/><path d="M4 6 L8 2 M6 2 H8 V4" fill="none" stroke="#b0b0b0" stroke-width="0.9"/><rect x="13.5" y="1.5" width="7" height="7" fill="none" stroke="#c8c8c8" stroke-width="1"/><path d="M13.5 3.5H20.5M13.5 5.5H20.5M16 1.5V8.5" stroke="#c8c8c8" stroke-width="0.8"/></svg>
<div class="a" style="left:69px;top:107.4px;width:869px;height:1px;background:#e6e6e6;"></div>
<div class="a" style="left:938px;top:108px;width:10px;height:389px;background:#e6e6e6;border-left:1px solid #b4b4b4"></div>
<div class="a" style="left:939.5px;top:110px;width:7.5px;height:7px;background:#fafafa;border:1px solid #c6c6c6"></div>
<svg class="a" style="left:940.5px;top:111.5px" width="6" height="4" viewBox="0 0 6 4"><polygon points="3,0.5 5.5,3.5 0.5,3.5" fill="#444"/></svg>
<div class="a" style="left:939.5px;top:117px;width:7.5px;height:87px;background:#fdfdfd;border:1px solid #c9c9c9"></div>
<div class="a" style="left:940.5px;top:489.7px;width:7px;height:7px;background:#fafafa;border:1px solid #c6c6c6"></div>
<svg class="a" style="left:941.5px;top:491.5px" width="6" height="4" viewBox="0 0 6 4"><polygon points="3,3.5 5.5,0.5 0.5,0.5" fill="#444"/></svg>
<div class="a" style="left:69px;top:497px;width:879px;height:16px;background:#e6e6e6;border-top:1px solid #d0d0d0;border-bottom:1px solid #f4f4f4"></div>
<svg class="a" style="left:83px;top:503px" width="22" height="6" viewBox="0 0 22 6"><polygon points="4,0.5 1,3 4,5.5" fill="#c6c6c6"/><polygon points="18,0.5 21,3 18,5.5" fill="#c6c6c6"/></svg>
<div class="a" style="left:126px;top:500px;width:1px;height:10px;background:#c4c4c4;"></div>
<div class="t" style="left:133.30px;top:501px;font-size:8.2px;color:#555;transform:scaleX(0.8990);">Assumptions</div>
<div class="a" style="left:185.6px;top:497px;width:38.6px;height:15px;background:#fff;border-left:1px solid #cfcfcf;border-right:1px solid #cfcfcf"></div>
<div class="a" style="left:186.6px;top:510.2px;width:36.6px;height:1.6px;background:#217346;"></div>
<div class="t" style="left:193.10px;top:501px;font-size:8.2px;color:#217346;font-weight:bold;transform:scaleX(0.8776);">Payroll</div>
<div class="t" style="left:231.80px;top:501px;font-size:8.2px;color:#555;transform:scaleX(0.8860);">Directions</div>
<div class="a" style="left:274.3px;top:500px;width:1px;height:10px;background:#c4c4c4;"></div>
<svg class="a" style="left:581px;top:501px" width="2" height="10" viewBox="0 0 2 10"><circle cx="1" cy="1.5" r="0.6" fill="#aaa"/><circle cx="1" cy="4.5" r="0.6" fill="#aaa"/><circle cx="1" cy="7.5" r="0.6" fill="#aaa"/></svg>
<div class="a" style="left:590.8px;top:501.5px;width:8.8px;height:8.3px;background:#fafafa;border:1px solid #c6c6c6"></div>
<svg class="a" style="left:593px;top:503.5px" width="4" height="5" viewBox="0 0 4 5"><polygon points="0.5,2.5 3.5,0.5 3.5,4.5" fill="#444"/></svg>
<div class="a" style="left:599.6px;top:501.5px;width:20.7px;height:8.3px;background:#fdfdfd;border:1px solid #c9c9c9"></div>
<div class="a" style="left:929.9px;top:501.5px;width:7.5px;height:7.5px;background:#fafafa;border:1px solid #c6c6c6"></div>
<svg class="a" style="left:932px;top:503px" width="4" height="5" viewBox="0 0 4 5"><polygon points="3.5,2.5 0.5,0.5 0.5,4.5" fill="#444"/></svg>
<div class="a" style="left:70px;top:513px;width:880px;height:16px;background:#2e3641;"></div>
<div class="t" style="left:440.40px;top:517px;font-size:9.4px;color:#e6e6e6;transform:scaleX(0.9363);">Spreading and Line item details</div>
<svg class="a" style="left:569px;top:517px" width="8" height="6" viewBox="0 0 8 6"><path d="M1 4.8 L4 1.6 L7 4.8" fill="none" stroke="#fff" stroke-width="1.6"/></svg>
<div class="t" style="left:37.8px;top:111px;font-size:12px;color:#7a7a7a;transform-origin:0 0;transform:rotate(-90deg) scaleX(0.958)">Parameters</div>
<div class="t" style="left:42.30px;top:37px;font-size:9px;color:#777;">»</div>
<svg class="a" style="left:39.5px;top:118.5px" width="9" height="9" viewBox="0 0 9 9"><path d="M0.5 0.8 H8.5 L5.3 4.5 V8.3 L3.7 7.3 V4.5 Z" fill="#555"/></svg>
<svg class="a" style="left:0;top:0" width="33" height="310" viewBox="0 0 33 310"><polygon points="7.8,16.8 20.6,10.9 17.3,18.3" fill="#1f74cf"/><polygon points="20.6,10.9 27.2,18.3 17.3,18.3" fill="#8dc63f"/><polyline points="10.3,47.3 17,40.6 23.7,47.3" fill="none" stroke="#3b8fe0" stroke-width="1.9"/><polygon points="12,46.3 17,41.6 22,46.3 22,52.7 12,52.7" fill="#fff"/><rect x="13.6" y="47.6" width="2.8" height="1.4" fill="#2e3641"/><rect x="18.2" y="47.6" width="2.2" height="5.2" fill="#2e3641"/><rect x="9.8" y="70.2" width="3.8" height="12.5" fill="#fff"/><rect x="14.4" y="70.2" width="3.8" height="12.5" fill="#fff"/><polygon points="18.9,70.6 22.3,70.0 24.6,82.2 21.2,82.8" fill="#fff"/><rect x="9.8" y="70.2" width="3.8" height="1.8" fill="#3b8fe0"/><rect x="14.4" y="70.2" width="3.8" height="1.8" fill="#3b8fe0"/><polygon points="18.9,70.6 22.3,70.0 22.6,71.8 19.2,72.4" fill="#3b8fe0"/><rect x="10.8" y="78.6" width="1.8" height="1.8" fill="#2e3641"/><rect x="15.4" y="78.6" width="1.8" height="1.8" fill="#2e3641"/><rect x="21.2" y="78.4" width="1.8" height="1.8" fill="#2e3641" transform="rotate(-10 22 79)"/><rect x="9.8" y="73.8" width="3.8" height="0.8" fill="#2e3641"/><rect x="14.4" y="73.8" width="3.8" height="0.8" fill="#2e3641"/><rect x="12.6" y="100.2" width="8.8" height="13.2" rx="1" fill="none" stroke="#fff" stroke-width="1.3"/><polygon points="14.5,101.2 15.6,98.4 18.4,98.4 19.5,101.2" fill="#fff"/><polyline points="14.3,104.2 16,106 19.6,102.6" fill="none" stroke="#3b8fe0" stroke-width="1.3"/><polyline points="14.3,108.4 16,110.2 19.6,106.8" fill="none" stroke="#3b8fe0" stroke-width="1.3"/><rect x="11.4" y="129.6" width="11.2" height="14" fill="none" stroke="#fff" stroke-width="1.3"/><rect x="13.2" y="131.8" width="7.6" height="1.4" fill="#fff"/><polygon points="14.6,135.4 20.4,139 14.6,142.4" fill="#3b8fe0"/><rect x="12" y="160" width="10" height="14" rx="1" fill="#fff"/><rect x="13.2" y="161.2" width="7.6" height="2.6" fill="#3b8fe0"/><rect x="13.4" y="165.2" width="1.6" height="1.7" fill="#2e3641"/><rect x="16.1" y="165.2" width="1.6" height="1.7" fill="#2e3641"/><rect x="18.8" y="165.2" width="1.6" height="1.7" fill="#2e3641"/><rect x="13.4" y="168.1" width="1.6" height="1.7" fill="#2e3641"/><rect x="16.1" y="168.1" width="1.6" height="1.7" fill="#2e3641"/><rect x="18.8" y="168.1" width="1.6" height="1.7" fill="#2e3641"/><rect x="13.4" y="171.0" width="1.6" height="1.7" fill="#2e3641"/><rect x="16.1" y="171.0" width="1.6" height="1.7" fill="#2e3641"/><rect x="18.8" y="171.0" width="1.6" height="1.7" fill="#2e3641"/><path d="M10 193.6 H13.2 L14.9 195.3 V201.2 H10 Z" fill="none" stroke="#fff" stroke-width="1"/><path d="M13 193.2 A6 6 0 0 1 22.6 193.6" fill="none" stroke="#3b8fe0" stroke-width="1.1"/><path d="M22.4 201.6 A6 6 0 0 1 12.6 201.8" fill="none" stroke="#3b8fe0" stroke-width="1.1"/><circle cx="20.8" cy="195.4" r="1.7" fill="#fff"/><path d="M18 200.8 V199.2 Q18 197.6 20.8 197.6 Q23.6 197.6 23.6 199.2 V200.8 Z" fill="#fff"/><rect x="14.7" y="221.6" width="4.6" height="3.2" rx="1.5" fill="none" stroke="#fff" stroke-width="1.3"/><rect x="14.7" y="227.2" width="4.6" height="3.2" rx="1.5" fill="none" stroke="#fff" stroke-width="1.3"/><rect x="14.7" y="232.8" width="4.6" height="3.2" rx="1.5" fill="none" stroke="#fff" stroke-width="1.3"/><path d="M13 226.2 Q11 227.6 12.6 229.4" fill="none" stroke="#3b8fe0" stroke-width="1.1"/><path d="M21 228 Q23 229.6 21.4 231.2" fill="none" stroke="#3b8fe0" stroke-width="1.1"/><path d="M10.6 265.4 L15.6 260.4" stroke="#3b8fe0" stroke-width="2.3" stroke-linecap="round"/><path d="M15.6 260.4 L19.4 256.4" stroke="#fff" stroke-width="2.0"/><polygon points="24.0,255.9 21.9,258.0 17.0,253.1 19.1,251.0" fill="#fff"/><path d="M13.2 256.8 L22 265.4" stroke="#fff" stroke-width="2.4" stroke-linecap="round"/><circle cx="11.6" cy="255.2" r="3.1" fill="#fff"/><path d="M8.2 253.4 L10.6 255.8 L12.4 254 L10 251.6 Z" fill="#2e3641"/><circle cx="21.6" cy="264.9" r="0.6" fill="#2e3641"/><g transform="translate(16.7 289.6)"><rect x="-1.5" y="-7.1" width="3" height="3" fill="#fff" transform="rotate(0)"/><rect x="-1.5" y="-7.1" width="3" height="3" fill="#fff" transform="rotate(45)"/><rect x="-1.5" y="-7.1" width="3" height="3" fill="#fff" transform="rotate(90)"/><rect x="-1.5" y="-7.1" width="3" height="3" fill="#fff" transform="rotate(135)"/><rect x="-1.5" y="-7.1" width="3" height="3" fill="#fff" transform="rotate(180)"/><rect x="-1.5" y="-7.1" width="3" height="3" fill="#fff" transform="rotate(225)"/><rect x="-1.5" y="-7.1" width="3" height="3" fill="#fff" transform="rotate(270)"/><rect x="-1.5" y="-7.1" width="3" height="3" fill="#fff" transform="rotate(315)"/><circle r="5.2" fill="#fff"/><circle r="2.3" fill="#2e3641"/></g></svg>
<svg class="a" style="left:0;top:0" width="950" height="60" viewBox="0 0 950 60"><rect x="41" y="8" width="5.6" height="1.2" fill="#555"/><rect x="41" y="10.4" width="5.6" height="1.2" fill="#555"/><rect x="41" y="12.8" width="5.6" height="1.2" fill="#555"/><path d="M709.5 7.8 Q712.4 8.4 712.4 11.6 V13.2 L713.4 14.2 H705.6 L706.6 13.2 V11.6 Q706.6 8.4 709.5 7.8 Z" fill="#333"/><circle cx="709.5" cy="15" r="0.9" fill="#333"/><path d="M760.2 11.4 L762.2 13.4 L764.2 11.4" fill="none" stroke="#999" stroke-width="0.8"/><circle cx="781.3" cy="10.9" r="3.8" fill="none" stroke="#333" stroke-width="1.1"/><circle cx="779.9" cy="9.9" r="0.7" fill="#333"/><circle cx="782.7" cy="9.9" r="0.7" fill="#333"/><path d="M779.3 12.1 Q781.3 14 783.3 12.1" fill="none" stroke="#333" stroke-width="0.9"/><circle cx="835.5" cy="11.3" r="4.1" fill="none" stroke="#222" stroke-width="1.1"/><path d="M833.9 10 Q833.9 8.3 835.5 8.3 Q837.2 8.3 837.2 9.8 Q837.2 10.9 835.6 11.5 V12.5" fill="none" stroke="#222" stroke-width="1.1"/><circle cx="835.6" cy="14" r="0.65" fill="#222"/><circle cx="885.4" cy="9.2" r="2.2" fill="#222"/><path d="M881.8 15.6 V14 Q881.8 11.8 885.4 11.8 Q889 11.8 889 14 V15.6 Z" fill="#222"/><rect x="71.6" y="40.5" width="5" height="8.5" fill="#333"/><rect x="76" y="44" width="4" height="5" fill="#556"/><rect x="77" y="45.5" width="2.2" height="2.6" fill="#5a8fc0"/><rect x="72.6" y="42" width="1" height="1" fill="#888"/><rect x="74.4" y="42" width="1" height="1" fill="#888"/><path d="M143.3 44.2 L145.2 46.2 L147.1 44.2" fill="none" stroke="#222" stroke-width="1.1"/><path d="M769 37.2 L776.6 29.8" stroke="#cfcfcf" stroke-width="1.6"/><path d="M794.2 30.2 H800.8 M794.2 30.2 L797.5 35.6 L800.8 30.2 M794.2 32.6 L797.5 35.6 L800.8 32.6" stroke="#222" stroke-width="0.8" fill="none"/><circle cx="794.2" cy="30.2" r="1.2" fill="#222"/><circle cx="800.8" cy="30.2" r="1.2" fill="#222"/><circle cx="794.2" cy="32.6" r="1.1" fill="#222"/><circle cx="800.8" cy="32.6" r="1.1" fill="#222"/><circle cx="797.5" cy="35.8" r="1.7" fill="#222"/><rect x="823.4" y="30.2" width="5.6" height="7.4" rx="0.8" fill="#3a3a3a"/><rect x="824.6" y="31.8" width="3.2" height="4.8" fill="#9a9a9a"/><rect x="863.8" y="28.9" width="8.5" height="8.9" fill="#555"/><rect x="864.8" y="29.6" width="6.5" height="1" fill="#999"/><rect x="864.8" y="31.4" width="6.5" height="4.4" fill="#fff"/><path d="M870.4 32.6 H866.2 M867.4 31.6 L866.2 32.6 L867.4 33.6 M865.6 34.8 H870.6" stroke="#333" stroke-width="0.8" fill="none"/><path d="M909.2 35.4 A4 4 0 1 0 908.9 31.6" fill="none" stroke="#1a1a1a" stroke-width="1.5"/><polygon points="907.2,31.2 911.0,32.6 908.0,35.0" fill="#1a1a1a"/><path d="M912.6 31.6 V33.6 L914.4 34.4" stroke="#1a1a1a" stroke-width="1.1" fill="none"/><path d="M937.5 30.6 L944 37 M944 30.6 L937.5 37" stroke="#111" stroke-width="1.8"/></svg>
<div id="frame"></div>
</body></html>
